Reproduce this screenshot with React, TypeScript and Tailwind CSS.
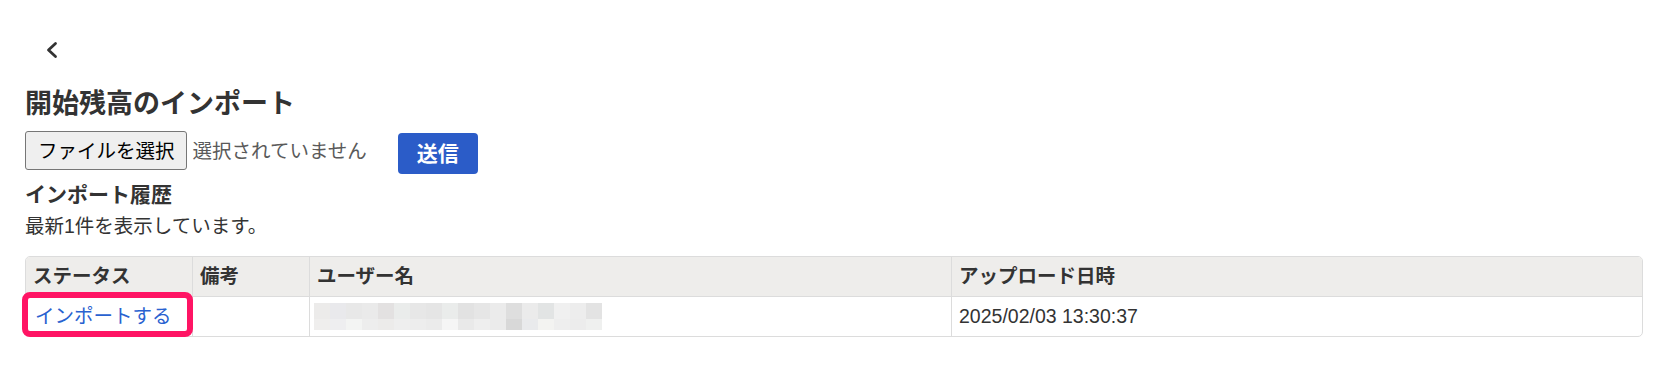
const blurTop = ['#ecebea', '#e9e9ec', '#e8e8e8', '#eaeaea', '#e3e1e1', '#eaeceb', '#e7e7e7', '#e5e5e5', '#eaeceb', '#e2e2e2', '#e6e6e6', '#ebebeb', '#dedede', '#ebebeb', '#e2e4e4', '#f0f0f0', '#ededed', '#e3e3e3']
const blurBottom = ['#efeeed', '#eeeef0', '#f3f4f3', '#ededed', '#ecebea', '#eeeeee', '#ededed', '#ebebeb', '#f5f5f5', '#e9e9e9', '#eeeeee', '#ebebeb', '#d8d8d8', '#e9eaec', '#f3f3f1', '#eeeeee', '#ececec', '#eff0ef']

function BlurredName() {
  return (
    <div className="flex flex-col">
      <div className="flex h-[16px]">
        {blurTop.map((c, i) => (
          <div key={i} className="w-[16px] h-full" style={{ backgroundColor: c }} />
        ))}
      </div>
      <div className="flex h-[11px]">
        {blurBottom.map((c, i) => (
          <div key={i} className="w-[16px] h-full" style={{ backgroundColor: c }} />
        ))}
      </div>
    </div>
  )
}

export default function App() {
  return (
    <div className="min-h-[374px] bg-white pl-[25px] pr-[26px] text-[#333] font-['Liberation_Sans','Noto_Sans_CJK_JP',sans-serif]">
      {/* 戻る */}
      <div className="pt-[41px] pl-[20px]">
        <svg width="14" height="18" viewBox="0 0 14 18" className="block">
          <polyline points="10.5,2.5 3.5,9 10.5,15.5" fill="none" stroke="#333" strokeWidth="2.8" strokeLinecap="round" strokeLinejoin="round" />
        </svg>
      </div>

      <h1 className="mt-[28px] text-[27px] leading-[34px] font-bold">開始残高のインポート</h1>

      {/* ファイル選択 */}
      <div className="mt-[10px] flex items-start">
        <button className="h-[39px] pl-[12px] pr-[11px] border border-[#767676] rounded-[3px] bg-[#efefef] text-[19.5px] leading-[26px] text-black">
          ファイルを選択
        </button>
        <div className="h-[39px] ml-[6px] flex items-center text-[19.5px] leading-[26px] text-[#5a5a5a]">
          選択されていません
        </div>
        <button className="mt-[2px] ml-[31px] w-[80px] h-[41px] rounded-[4px] bg-[#2b5cc8] text-white text-[21px] leading-[26px] font-bold">
          送信
        </button>
      </div>

      <h2 className="mt-[8px] text-[21px] leading-[26px] font-bold">インポート履歴</h2>
      <p className="mt-[5px] text-[19.5px] leading-[26px]">最新1件を表示しています。</p>

      {/* 履歴テーブル */}
      <div className="relative mt-[17px]">
        <div className="border border-[#dcdcdc] rounded-[5px] overflow-hidden">
          <div className="grid grid-cols-[166px_117px_642px_1fr] h-[40px] bg-[#eeedeb] border-b border-[#dcdcdc] text-[19.5px] font-bold">
            <div className="flex items-center pl-[7px]">ステータス</div>
            <div className="flex items-center pl-[7px] border-l border-[#dcdcdc]">備考</div>
            <div className="flex items-center pl-[7px] border-l border-[#dcdcdc]">ユーザー名</div>
            <div className="flex items-center pl-[7px] border-l border-[#dcdcdc]">アップロード日時</div>
          </div>
          <div className="grid grid-cols-[166px_117px_642px_1fr] h-[39px] text-[19.5px]">
            <div className="flex items-center pl-[9px]">
              <a href="#" className="text-[#2962d0]">インポートする</a>
            </div>
            <div className="border-l border-[#dcdcdc]" />
            <div className="flex items-center pl-[4px] border-l border-[#dcdcdc]">
              <BlurredName />
            </div>
            <div className="flex items-center pl-[7px] border-l border-[#dcdcdc] font-['Liberation_Sans',sans-serif] text-[19.5px]">
              2025/02/03 13:30:37
            </div>
          </div>
        </div>
        {/* 注目枠 */}
        <div className="absolute left-[-3px] top-[36px] w-[171px] h-[45px] border-[6px] border-[#ff1464] rounded-[8px]" />
      </div>
    </div>
  )
}
